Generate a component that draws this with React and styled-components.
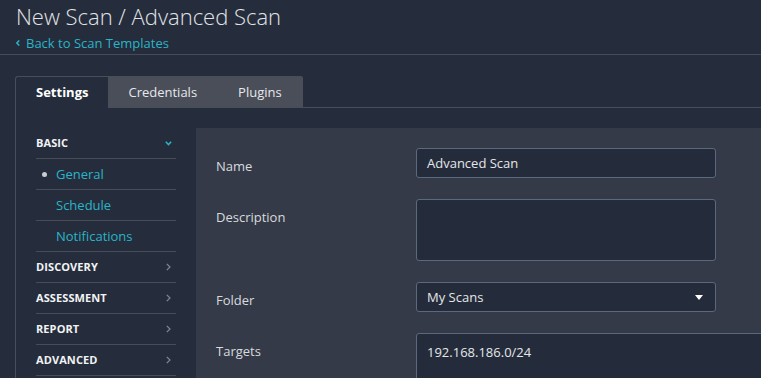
import React from "react";
import styled, { createGlobalStyle } from "styled-components";

const Global = createGlobalStyle`
  html, body { margin: 0; padding: 0; background: #252d3c; }
  body { font-family: "Open Sans", "Noto Sans", sans-serif; overflow: hidden; }
  * { box-sizing: border-box; }
`;

const Page = styled.div`
  width: 761px;
  height: 378px;
  overflow: hidden;
  background: #252d3c;
  color: #d6d8dc;
`;

const Header = styled.header`
  padding: 1px 16px 1px;
  border-bottom: 1px solid #454b57;
`;

const Title = styled.h1`
  margin: 0;
  font-size: 22px;
  font-weight: 300;
  line-height: 30px;
  color: #e2e4e8;
`;

const BackLink = styled.a`
  display: flex;
  align-items: center;
  gap: 6px;
  margin-top: 2px;
  height: 20px;
  font-size: 13px;
  line-height: 20px;
  color: #2ab4c8;
  text-decoration: none;
`;

const Main = styled.div`
  padding: 21px 0 0 15px;
`;

const TabBar = styled.div`
  display: flex;
  height: 32px;
  border-bottom: 1px solid #474d59;
`;

const Tab = styled.div`
  display: flex;
  align-items: center;
  padding: 0 ${(p) => (p.$active ? "20px" : "21px")} 0 20px;
  height: ${(p) => (p.$active ? "32px" : "31px")};
  font-size: 13px;
  font-weight: ${(p) => (p.$active ? 700 : 400)};
  color: ${(p) => (p.$active ? "#ffffff" : "#e6e8ec")};
  background: ${(p) => (p.$active ? "#252d3c" : "#4a4e59")};
  border-top: ${(p) => (p.$active ? "1px solid #474d59" : "none")};
  border-left: ${(p) => (p.$active ? "1px solid #474d59" : "none")};
  border-top-left-radius: ${(p) => (p.$active ? "3px" : "0")};
  border-top-right-radius: ${(p) => (p.$last ? "2px" : "0")};
  padding-bottom: ${(p) => (p.$active ? "1px" : "0")};
`;

const Body = styled.div`
  display: flex;
  border-left: 1px solid #474d59;
  margin-top: -1px;
  padding-top: 21px;
  min-height: 300px;
`;

const Sidebar = styled.nav`
  width: 180px;
  flex-shrink: 0;
  padding: 0 20px;
`;

const Row = styled.div`
  display: flex;
  align-items: center;
  height: 31px;
  border-bottom: 1px solid #464c58;
  position: relative;
  padding-left: ${(p) => (p.$sub ? "20px" : "0")};
`;

const Section = styled.span`
  flex: 1;
  font-size: 11px;
  font-weight: 700;
  color: #f2f3f5;
  letter-spacing: 0.1px;
  margin-top: -1px;
`;

const Item = styled.span`
  flex: 1;
  font-size: 13px;
  color: #2ab4c8;
`;

const Dot = styled.span`
  position: absolute;
  left: 6px;
  top: 13px;
  width: 5px;
  height: 5px;
  border-radius: 50%;
  background: #c9ccd2;
`;

const Chev = styled.svg`
  margin-right: ${(p) => p.$mr || "6px"};
`;

const Content = styled.section`
  flex: 1;
  background: #343a48;
  padding: 20px 0 0 20px;
  min-height: 260px;
`;

const FormRow = styled.div`
  display: flex;
  margin-bottom: 21px;
`;

const Label = styled.label`
  width: 200px;
  flex-shrink: 0;
  padding-top: 9px;
  font-size: 13px;
  line-height: 18px;
  color: #d8dade;
`;

const Field = styled.div`
  position: relative;
  width: ${(p) => p.$w || "300px"};
  height: ${(p) => p.$h || "30px"};
  background: #242c3b;
  border: 1px solid #5c697c;
  border-radius: 3px;
  padding: ${(p) => (p.$multi ? "9px 10px" : "0 10px")};
  display: flex;
  align-items: ${(p) => (p.$multi ? "flex-start" : "center")};
  justify-content: space-between;
  font-size: 13px;
  line-height: 18px;
  color: #e4e6ea;
  flex-shrink: 0;
`;

const Caret = styled.svg`
  margin-right: 2px;
`;

function ChevronDown() {
  return (
    <Chev width="7" height="5" viewBox="0 0 7 5" $mr="4px">
      <path d="M0.8 0.8 L3.5 3.6 L6.2 0.8" fill="none" stroke="#2ab4c8" strokeWidth="1.5" />
    </Chev>
  );
}

function ChevronRight() {
  return (
    <Chev width="5" height="8" viewBox="0 0 5 8" $mr="5px">
      <path d="M0.8 0.8 L4 4 L0.8 7.2" fill="none" stroke="#7f889a" strokeWidth="1.2" />
    </Chev>
  );
}

const sections = ["DISCOVERY", "ASSESSMENT", "REPORT", "ADVANCED"];

export default function App() {
  return (
    <Page>
      <Global />
      <Header>
        <Title>New Scan / Advanced Scan</Title>
        <BackLink href="#">
          <svg width="4" height="6" viewBox="0 0 4 6">
            <path d="M3.3 0.5 L0.8 3 L3.3 5.5" fill="none" stroke="#2ab4c8" strokeWidth="1.5" />
          </svg>
          Back to Scan Templates
        </BackLink>
      </Header>
      <Main>
        <TabBar>
          <Tab $active>Settings</Tab>
          <Tab>Credentials</Tab>
          <Tab $last>Plugins</Tab>
        </TabBar>
        <Body>
          <Sidebar>
            <Row>
              <Section>BASIC</Section>
              <ChevronDown />
            </Row>
            <Row $sub>
              <Dot />
              <Item>General</Item>
            </Row>
            <Row $sub>
              <Item>Schedule</Item>
            </Row>
            <Row $sub>
              <Item>Notifications</Item>
            </Row>
            {sections.map((s) => (
              <Row key={s}>
                <Section>{s}</Section>
                <ChevronRight />
              </Row>
            ))}
          </Sidebar>
          <Content>
            <FormRow>
              <Label>Name</Label>
              <Field>Advanced Scan</Field>
            </FormRow>
            <FormRow>
              <Label>Description</Label>
              <Field $h="62px" $multi />
            </FormRow>
            <FormRow>
              <Label>Folder</Label>
              <Field>
                My Scans
                <Caret width="8" height="5" viewBox="0 0 8 5">
                  <path d="M0 0 H8 L4 5 Z" fill="#ffffff" />
                </Caret>
              </Field>
            </FormRow>
            <FormRow>
              <Label>Targets</Label>
              <Field $w="500px" $h="90px" $multi>192.168.186.0/24</Field>
            </FormRow>
          </Content>
        </Body>
      </Main>
    </Page>
  );
}
